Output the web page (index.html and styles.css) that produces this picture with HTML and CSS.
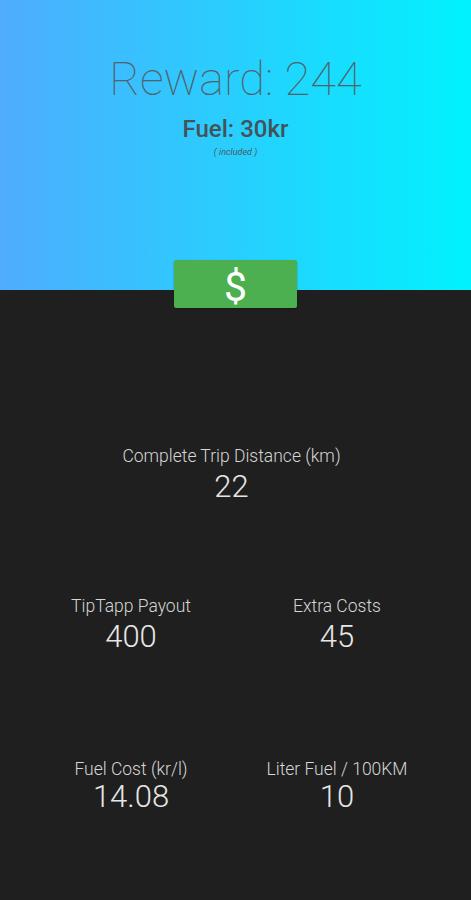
FILE: index.html
```html
<!DOCTYPE html>
<html>
<head>
<meta charset="utf-8">
<link rel="stylesheet" href="styles.css">
</head>
<body>
<div class="app">
  <header class="hero">
    <div class="reward">Reward: 244</div>
    <div class="fuel">Fuel: 30kr</div>
    <div class="included">( included )</div>
    <div class="spacer"></div>
    <button class="pay-btn">$</button>
  </header>
  <main class="stats">
    <div class="stat stat-full">
      <div class="label">Complete Trip Distance (km)</div>
      <div class="value">22</div>
    </div>
    <div class="stat-row row-one">
      <div class="stat">
        <div class="label">TipTapp Payout</div>
        <div class="value">400</div>
      </div>
      <div class="stat">
        <div class="label">Extra Costs</div>
        <div class="value">45</div>
      </div>
    </div>
    <div class="stat-row row-two">
      <div class="stat tight">
        <div class="label">Fuel Cost (kr/l)</div>
        <div class="value">14.08</div>
      </div>
      <div class="stat tight">
        <div class="label">Liter Fuel / 100KM</div>
        <div class="value">10</div>
      </div>
    </div>
  </main>
</div>
</body>
</html>
```
FILE: styles.css
```css
html, body {
  margin: 0;
  padding: 0;
  background: #1f1f1f;
}
.app {
  width: 471px;
  height: 900px;
  font-family: Roboto, "Liberation Sans", sans-serif;
  background: #1f1f1f;
  overflow: hidden;
}
.hero {
  height: 290px;
  box-sizing: border-box;
  padding-top: 51px;
  background: linear-gradient(90deg, #4facfe 0%, #00f2fe 100%);
  display: flex;
  flex-direction: column;
  align-items: center;
}
.reward {
  font-size: 47px;
  line-height: 56px;
  font-weight: 100;
  color: #52626a;
}
.fuel {
  margin-top: 8px;
  font-size: 24px;
  line-height: 28px;
  font-weight: 500;
  color: #44525a;
}
.included {
  margin-top: 4px;
  font-size: 9px;
  line-height: 11px;
  font-style: italic;
  color: #4a5a62;
}
.spacer {
  flex: 1;
}
.pay-btn {
  flex: none;
  width: 123px;
  height: 48px;
  margin-bottom: -18px;
  border: none;
  border-radius: 2px;
  background: #4caf50;
  color: #ffffff;
  font-family: Roboto, "Liberation Sans", sans-serif;
  font-size: 41px;
  line-height: 48px;
  font-weight: 400;
  padding: 5px 0 0 0;
  box-sizing: border-box;
  display: flex;
  align-items: center;
  justify-content: center;
  box-shadow: 0 1px 2px rgba(0, 0, 0, 0.3);
  position: relative;
  z-index: 1;
}
.stats {
  padding: 156px 31px 0 28px;
  display: flex;
  flex-direction: column;
}
.stat {
  display: flex;
  flex-direction: column;
  align-items: center;
  gap: 4px;
}
.stat.tight {
  gap: 1px;
}
.stat-full {
  margin-left: -28px;
  margin-right: -31px;
  padding-right: 8px;
}
.stat-row {
  display: grid;
  grid-template-columns: 1fr 1fr;
}
.row-one {
  margin-top: 92px;
}
.row-two {
  margin-top: 105px;
}
.label {
  font-size: 17.5px;
  line-height: 20px;
  font-weight: 300;
  color: #d6d6d6;
}
.value {
  font-size: 31px;
  line-height: 34px;
  font-weight: 300;
  color: #e6e6e6;
}
```
